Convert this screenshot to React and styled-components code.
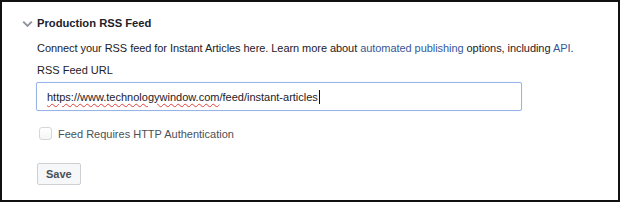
import React from "react";
import styled, { createGlobalStyle } from "styled-components";

const Global = createGlobalStyle`
  html, body { margin: 0; padding: 0; background: #fff; }
  * { box-sizing: border-box; }
`;

const Frame = styled.div`
  width: 620px;
  height: 202px;
  border: 2px solid #111;
  background: #fff;
  font-family: "Liberation Sans", Arial, sans-serif;
  font-size: 11px;
  color: #1d2129;
  padding: 14px 0 0 20px;
`;

const Header = styled.div`
  display: flex;
  align-items: center;
  gap: 4px;
  height: 14px;
`;

const Chevron = styled.svg`
  width: 11px;
  height: 8px;
  flex: none;
  margin-top: 2px;
`;

const Title = styled.div`
  font-weight: bold;
  font-size: 11.2px;
  color: #1d2129;
`;

const Body = styled.div`
  padding-left: 15px;
  display: flex;
  flex-direction: column;
`;

const Desc = styled.div`
  margin-top: 10px;
  line-height: 16px;
  white-space: nowrap;
  letter-spacing: -0.06px;
  color: #1d2129;
`;

const Link = styled.a`
  color: #365899;
  text-decoration: none;
`;

const Label = styled.div`
  margin-top: 6px;
  line-height: 16px;
`;

const Input = styled.div`
  margin-top: 4px;
  margin-left: -1px;
  width: 486px;
  height: 29px;
  border: 1px solid #98b3e6;
  border-radius: 2px;
  box-shadow: 0 0 1px #bcd0f5;
  display: flex;
  align-items: center;
  padding-left: 10px;
  color: #1d2129;
`;

const Spell = styled.span`
  text-decoration: underline wavy #e0403a;
  text-decoration-thickness: 1px;
  text-underline-offset: 2px;
`;

const Caret = styled.span`
  display: inline-block;
  width: 1px;
  height: 14px;
  background: #111;
  vertical-align: middle;
  margin-left: 1px;
`;

const CheckRow = styled.label`
  margin-top: 16px;
  display: flex;
  align-items: center;
  gap: 6px;
  margin-left: 2px;
  color: #4b4f56;
`;

const Box = styled.span`
  width: 13px;
  height: 13px;
  border: 1px solid #d3d6db;
  border-radius: 3px;
  background: linear-gradient(#fff, #f5f6f7);
  flex: none;
`;

const Save = styled.button`
  margin-top: 23px;
  align-self: flex-start;
  height: 22px;
  padding: 0 8px;
  border: 1px solid #ced0d4;
  border-radius: 2px;
  background: #f6f7f9;
  color: #4b4f56;
  font-family: "Liberation Sans", Arial, sans-serif;
  font-size: 11px;
  font-weight: bold;
`;

export default function App() {
  return (
    <>
      <Global />
      <Frame>
        <Header>
          <Chevron viewBox="0 0 11 8">
            <path d="M1.2 1.6 L5.5 5.9 L9.8 1.6" fill="none" stroke="#90949c" strokeWidth="2" />
          </Chevron>
          <Title>Production RSS Feed</Title>
        </Header>
        <Body>
          <Desc>
            Connect your RSS feed for Instant Articles here. Learn more about{" "}
            <Link>automated publishing</Link> options, including <Link>API</Link>.
          </Desc>
          <Label>RSS Feed URL</Label>
          <Input>
            <span>
              <Spell>https://www.technologywindow.com</Spell>/feed/instant-articles
            </span>
            <Caret />
          </Input>
          <CheckRow>
            <Box />
            Feed Requires HTTP Authentication
          </CheckRow>
          <Save>Save</Save>
        </Body>
      </Frame>
    </>
  );
}
